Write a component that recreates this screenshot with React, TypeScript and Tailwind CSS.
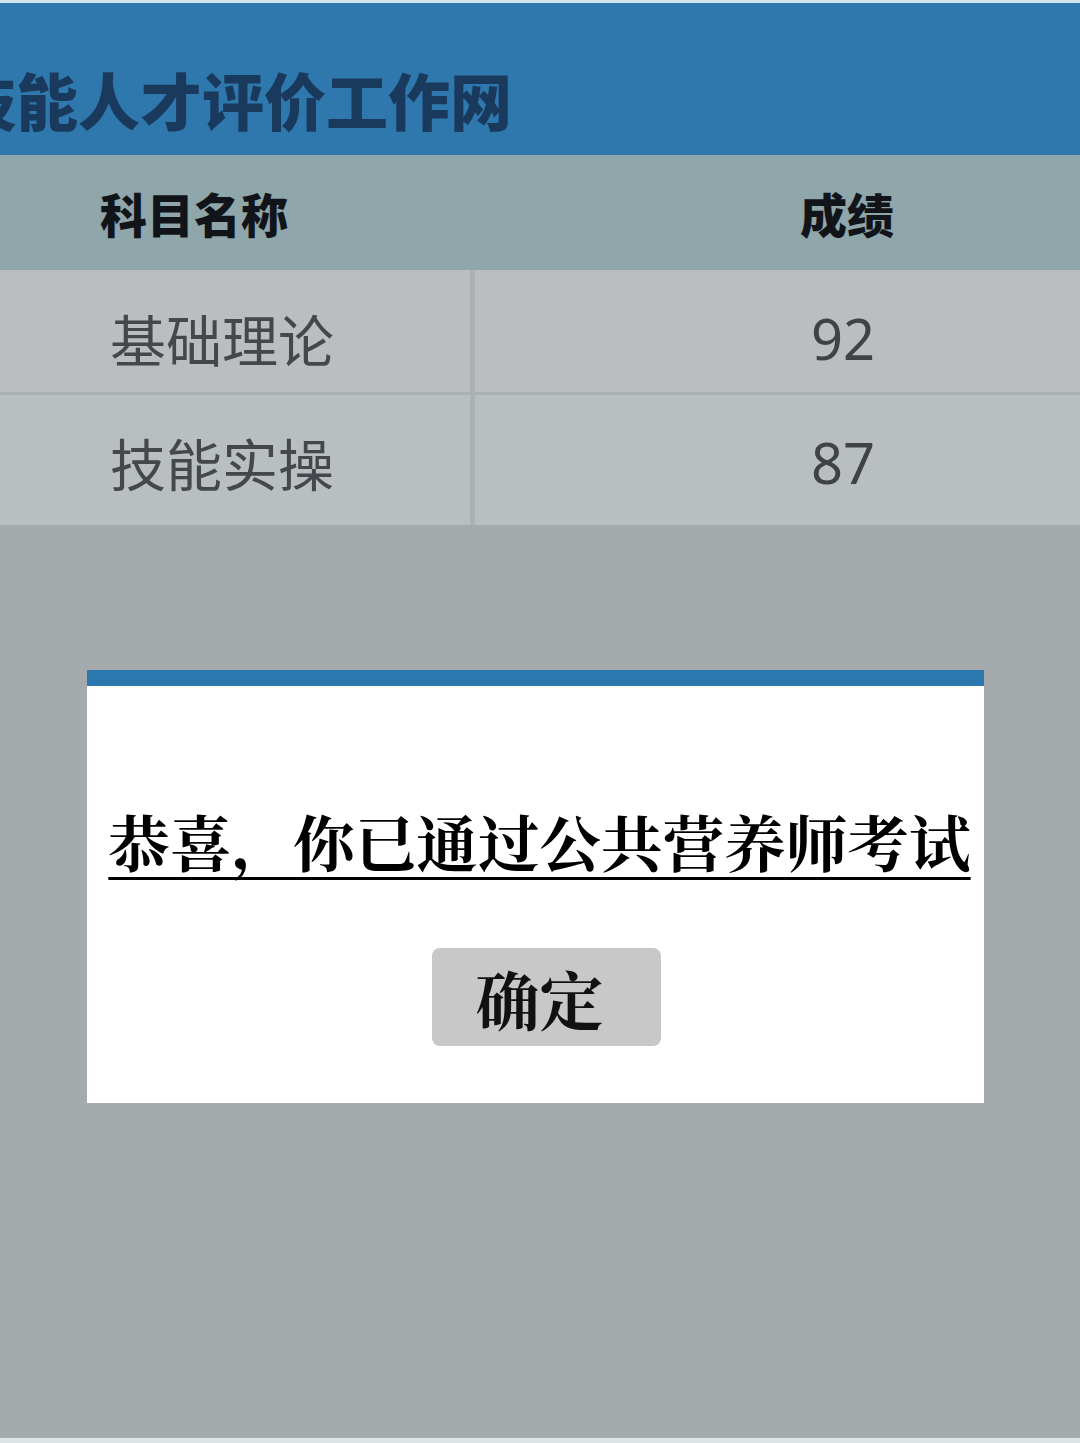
import React from "react";

const sans = { fontFamily: '"Noto Sans CJK SC", "Noto Sans", sans-serif' };
const serif = { fontFamily: '"Noto Serif CJK SC", "Liberation Serif", "Noto Sans CJK SC", serif' };

const rows = [
  { name: "基础理论", score: "92", h: "h-[125px]", pt: "pt-[14px]" },
  { name: "技能实操", score: "87", h: "h-[130px]", pt: "pt-[4px]" },
];

export default function App() {
  return (
    <div className="w-[1080px] h-[1443px] overflow-hidden bg-[#a5abac] flex flex-col" style={sans}>
      {/* site banner */}
      <div className="h-[3px] bg-[#cfe3ee]" />
      <div className="h-[152px] bg-[#2f78ad] flex items-center pt-[40px] overflow-hidden">
        <div className="ml-[-46px] whitespace-nowrap text-[62px] leading-none font-black text-[#1a3a5d]">
          技能人才评价工作网
        </div>
      </div>

      {/* score table */}
      <div className="w-[1215px]">
        <div className="h-[115px] bg-[#8fa6aa] grid grid-cols-[475px_740px] items-center">
          <div className="pl-[100px] text-[47px] leading-none font-black text-[#111418]">科目名称</div>
          <div className="pl-[325px] text-[47px] leading-none font-black text-[#111418]">成绩</div>
        </div>
        {rows.map((r, i) => (
          <div
            key={r.name}
            className={
              i === 0
                ? `${r.h} bg-[#babec1] grid grid-cols-[475px_740px] border-b-[3px] border-[#aab1b4]`
                : `${r.h} bg-[#b9bfc1] grid grid-cols-[475px_740px]`
            }
          >
            <div className={`pl-[110px] ${r.pt} flex items-center border-r-[5px] border-[#abb1b4] text-[56px] leading-none text-[#44474c]`}>
              {r.name}
            </div>
            <div
              className={`${r.pt} flex items-center pl-[336px] text-[56px] leading-none text-[#3f4247]`}
              style={{ fontFamily: '"Noto Sans", "Open Sans", sans-serif' }}
            >
              {r.score}
            </div>
          </div>
        ))}
      </div>

      {/* result dialog */}
      <div className="mt-[145px] ml-[87px] w-[897px] bg-white flex flex-col">
        <div className="h-[16px] bg-[#2a78af]" />
        <div className="flex flex-col items-center pt-[124px] pb-[57px]">
          <div
            className="ml-[8px] text-[61.6px] leading-none font-bold text-black whitespace-nowrap underline decoration-[3px] underline-offset-[10px]"
            style={serif}
          >
            恭喜，你已通过公共营养师考试
          </div>
          <button
            className="mt-[76px] ml-[22px] w-[229px] h-[98px] pr-[14px] rounded-[8px] bg-[#c8c8c8] text-[64px] leading-none font-bold text-[#111] flex items-center justify-center"
            style={serif}
          >
            确定
          </button>
        </div>
      </div>

      <div className="flex-1" />
      <div className="h-[5px] bg-[#dde4e4]" />
    </div>
  );
}
